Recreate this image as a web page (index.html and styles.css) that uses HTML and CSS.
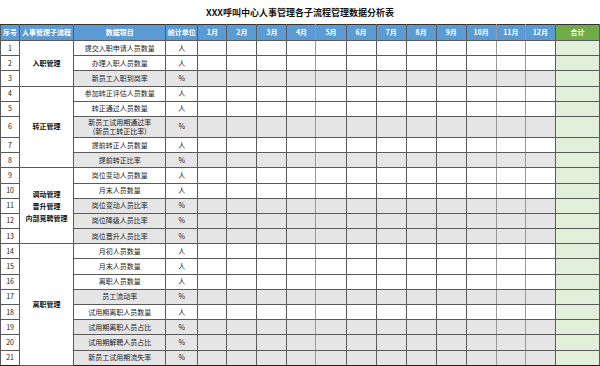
FILE: index.html
```html
<!DOCTYPE html>
<html lang="zh">
<head>
<meta charset="utf-8">
<link rel="stylesheet" href="styles.css">
</head>
<body>
<div class="title">XXX呼叫中心人事管理各子流程管理数据分析表</div>
<table class="sheet">
<colgroup>
<col class="c-no"><col class="c-proc"><col class="c-item"><col class="c-unit">
<col class="c-m1"><col class="c-m"><col class="c-m"><col class="c-m1"><col class="c-m"><col class="c-m"><col class="c-m"><col class="c-m"><col class="c-m"><col class="c-m"><col class="c-m1"><col class="c-m">
<col class="c-sum">
</colgroup>
<thead>
<tr>
<th>序号</th><th>人事管理子流程</th><th>数据项目</th><th>统计单位</th>
<th>1月</th><th>2月</th><th>3月</th><th class="soft">4月</th><th>5月</th><th>6月</th><th>7月</th><th>8月</th><th>9月</th><th class="soft">10月</th><th class="soft">11月</th><th>12月</th>
<th class="sum">合计</th>
</tr>
</thead>
<tbody>
<tr><td>1</td><td class="proc" rowspan="3">入职管理</td><td>提交入职申请人员数量</td><td>人</td><td></td><td></td><td></td><td class="soft"></td><td></td><td></td><td></td><td></td><td></td><td class="soft"></td><td class="soft"></td><td></td><td class="sum"></td></tr>
<tr><td>2</td><td>办理入职人员数量</td><td>人</td><td></td><td></td><td></td><td class="soft"></td><td></td><td></td><td></td><td></td><td></td><td class="soft"></td><td class="soft"></td><td></td><td class="sum"></td></tr>
<tr class="g"><td>3</td><td>新员工入职到岗率</td><td>%</td><td></td><td></td><td></td><td class="soft"></td><td></td><td></td><td></td><td></td><td></td><td class="soft"></td><td class="soft"></td><td></td><td class="sum"></td></tr>
<tr><td>4</td><td class="proc" rowspan="5">转正管理</td><td>参加转正评估人员数量</td><td>人</td><td></td><td></td><td></td><td class="soft"></td><td></td><td></td><td></td><td></td><td></td><td class="soft"></td><td class="soft"></td><td></td><td class="sum"></td></tr>
<tr><td>5</td><td>转正通过人员数量</td><td>人</td><td></td><td></td><td></td><td class="soft"></td><td></td><td></td><td></td><td></td><td></td><td class="soft"></td><td class="soft"></td><td></td><td class="sum"></td></tr>
<tr class="g tall"><td>6</td><td>新员工试用期通过率<br>(新员工转正比率)</td><td>%</td><td></td><td></td><td></td><td class="soft"></td><td></td><td></td><td></td><td></td><td></td><td class="soft"></td><td class="soft"></td><td></td><td class="sum"></td></tr>
<tr><td>7</td><td>提前转正人员数量</td><td>人</td><td></td><td></td><td></td><td class="soft"></td><td></td><td></td><td></td><td></td><td></td><td class="soft"></td><td class="soft"></td><td></td><td class="sum"></td></tr>
<tr class="g"><td>8</td><td>提前转正比率</td><td>%</td><td></td><td></td><td></td><td class="soft"></td><td></td><td></td><td></td><td></td><td></td><td class="soft"></td><td class="soft"></td><td></td><td class="sum"></td></tr>
<tr><td>9</td><td class="proc multi" rowspan="5">调动管理<br>晋升管理<br>内部竞聘管理</td><td>岗位变动人员数量</td><td>人</td><td></td><td></td><td></td><td class="soft"></td><td></td><td></td><td></td><td></td><td></td><td class="soft"></td><td class="soft"></td><td></td><td class="sum"></td></tr>
<tr><td>10</td><td>月末人员数量</td><td>人</td><td></td><td></td><td></td><td class="soft"></td><td></td><td></td><td></td><td></td><td></td><td class="soft"></td><td class="soft"></td><td></td><td class="sum"></td></tr>
<tr class="g"><td>11</td><td>岗位变动人员比率</td><td>%</td><td></td><td></td><td></td><td class="soft"></td><td></td><td></td><td></td><td></td><td></td><td class="soft"></td><td class="soft"></td><td></td><td class="sum"></td></tr>
<tr class="g"><td>12</td><td>岗位降级人员比率</td><td>%</td><td></td><td></td><td></td><td class="soft"></td><td></td><td></td><td></td><td></td><td></td><td class="soft"></td><td class="soft"></td><td></td><td class="sum"></td></tr>
<tr class="g"><td>13</td><td>岗位晋升人员比率</td><td>%</td><td></td><td></td><td></td><td class="soft"></td><td></td><td></td><td></td><td></td><td></td><td class="soft"></td><td class="soft"></td><td></td><td class="sum"></td></tr>
<tr><td>14</td><td class="proc" rowspan="8">离职管理</td><td>月初人员数量</td><td>人</td><td></td><td></td><td></td><td class="soft"></td><td></td><td></td><td></td><td></td><td></td><td class="soft"></td><td class="soft"></td><td></td><td class="sum"></td></tr>
<tr><td>15</td><td>月末人员数量</td><td>人</td><td></td><td></td><td></td><td class="soft"></td><td></td><td></td><td></td><td></td><td></td><td class="soft"></td><td class="soft"></td><td></td><td class="sum"></td></tr>
<tr><td>16</td><td>离职人员数量</td><td>人</td><td></td><td></td><td></td><td class="soft"></td><td></td><td></td><td></td><td></td><td></td><td class="soft"></td><td class="soft"></td><td></td><td class="sum"></td></tr>
<tr class="g"><td>17</td><td>员工流动率</td><td>%</td><td></td><td></td><td></td><td class="soft"></td><td></td><td></td><td></td><td></td><td></td><td class="soft"></td><td class="soft"></td><td></td><td class="sum"></td></tr>
<tr><td>18</td><td>试用期离职人员数量</td><td>人</td><td></td><td></td><td></td><td class="soft"></td><td></td><td></td><td></td><td></td><td></td><td class="soft"></td><td class="soft"></td><td></td><td class="sum"></td></tr>
<tr class="g"><td>19</td><td>试用期离职人员占比</td><td>%</td><td></td><td></td><td></td><td class="soft"></td><td></td><td></td><td></td><td></td><td></td><td class="soft"></td><td class="soft"></td><td></td><td class="sum"></td></tr>
<tr class="g"><td>20</td><td>试用期解聘人员占比</td><td>%</td><td></td><td></td><td></td><td class="soft"></td><td></td><td></td><td></td><td></td><td></td><td class="soft"></td><td class="soft"></td><td></td><td class="sum"></td></tr>
<tr class="g"><td>21</td><td>新员工试用期流失率</td><td>%</td><td></td><td></td><td></td><td class="soft"></td><td></td><td></td><td></td><td></td><td></td><td class="soft"></td><td class="soft"></td><td></td><td class="sum"></td></tr>
</tbody>
</table>
</body>
</html>
```
FILE: styles.css
```css
html, body {
  margin: 0;
  padding: 0;
  background: #ffffff;
}
body {
  font-family: "Noto Sans CJK SC", "Noto Sans", sans-serif;
  color: #222;
  width: 600px;
}
.title {
  height: 24px;
  line-height: 24px;
  padding-top: 1px;
  box-sizing: border-box;
  text-align: center;
  font-size: 9px;
  font-weight: 700;
  color: #111;
}
.sheet {
  width: 600px;
  table-layout: fixed;
  border-collapse: collapse;
  font-size: 7px;
}
.c-no { width: 19px; }
.c-proc { width: 54px; }
.c-item { width: 92px; }
.c-unit { width: 32px; }
.c-m { width: 30px; }
.c-m1 { width: 29px; }
.c-sum { width: 44px; }
.sheet th, .sheet td {
  border: 1px solid #5a5a5a;
  padding: 0;
  text-align: center;
  vertical-align: middle;
  line-height: 9px;
  overflow: hidden;
  white-space: nowrap;
}
.sheet th {
  background: #5b9bd5;
  color: #ffffff;
  font-weight: 700;
  height: 15px;
  border-top-color: #333;
}
.sheet th.sum {
  background: #70ad47;
}
.sheet tbody tr {
  height: 15.2px;
}
.sheet tbody tr.tall {
  height: 21px;
}
.sheet tr.g td {
  background: #e5e5e5;
}
.sheet tr.g td:first-child {
  background: #ffffff;
}
.sheet td.proc {
  background: #ffffff;
  font-weight: 700;
  color: #111;
}
.sheet td.proc.multi {
  line-height: 12px;
}
.sheet td.sum,
.sheet tr.g td.sum {
  background: #e2efda;
}
.sheet th.soft, .sheet td.soft {
  border-right: 1px solid #9a9a9a;
}
.sheet tbody tr:last-child td {
  border-bottom: 1px solid #222;
}
```
